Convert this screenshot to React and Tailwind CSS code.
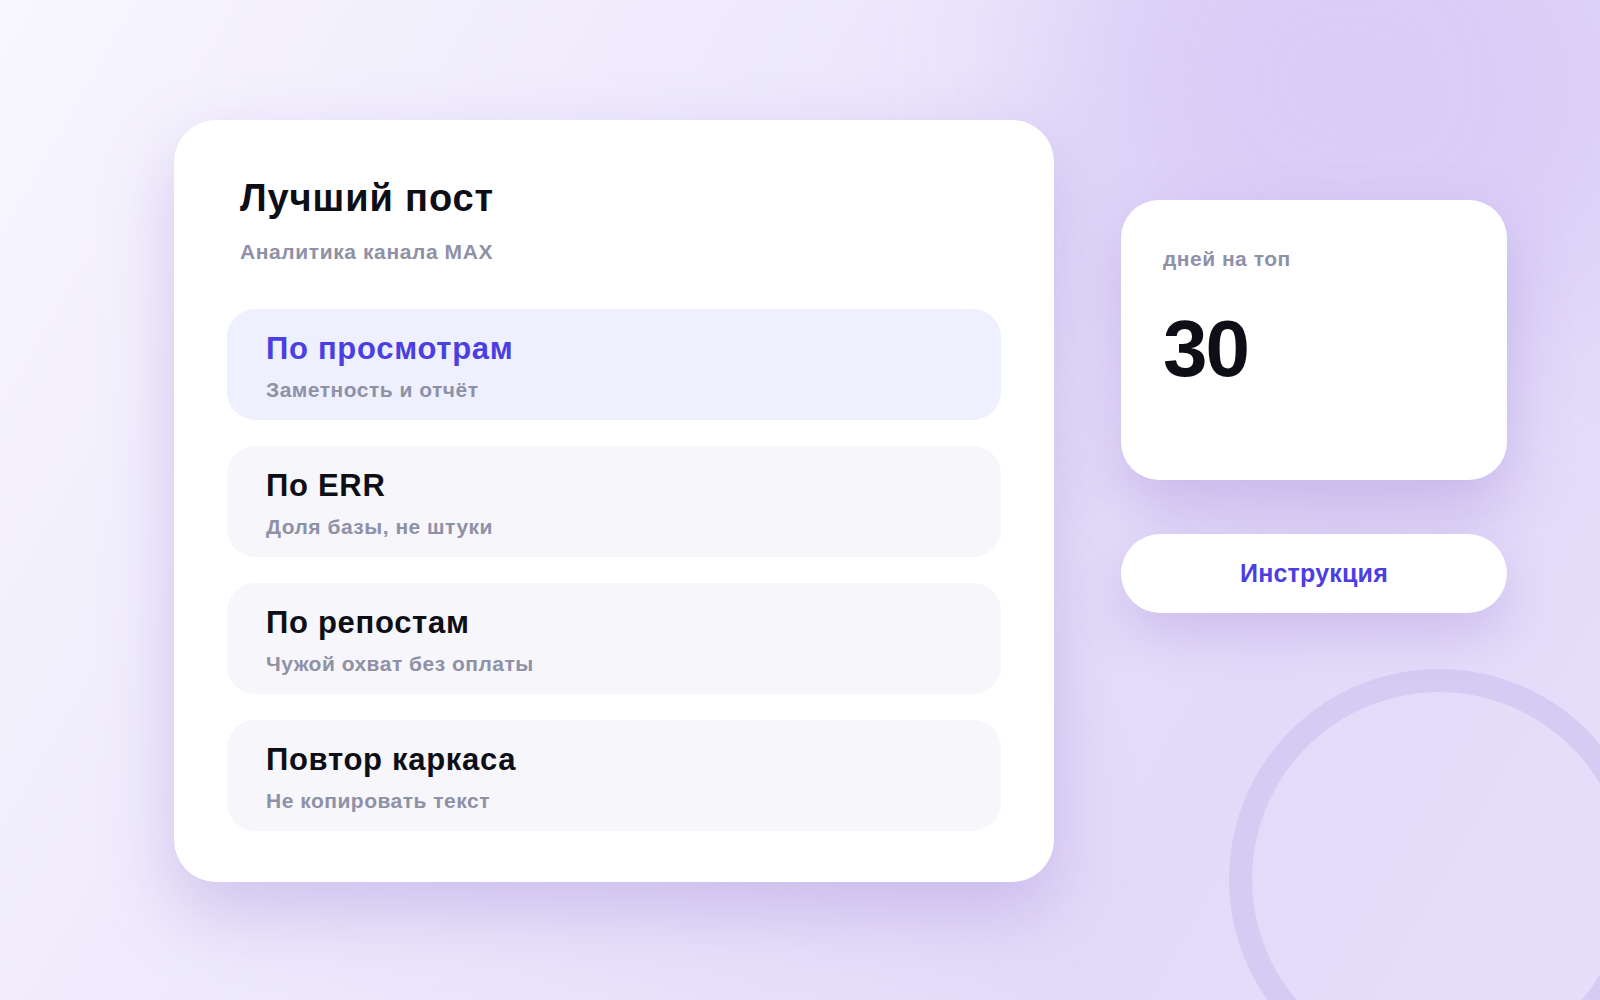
import React from 'react';

const items = [
  { title: 'По просмотрам', sub: 'Заметность и отчёт', active: true },
  { title: 'По ERR', sub: 'Доля базы, не штуки' },
  { title: 'По репостам', sub: 'Чужой охват без оплаты' },
  { title: 'Повтор каркаса', sub: 'Не копировать текст' },
];

export default function App() {
  return (
    <div
      className="relative w-[1600px] h-[1000px] overflow-hidden bg-[linear-gradient(120deg,#f8f6fe_0%,#ede8fc_40%,#e3daf9_75%,#e6defa_100%)]"
      style={{ fontFamily: '"Liberation Sans", Arial, sans-serif' }}
    >
      {/* soft glow top-right */}
      <div className="absolute left-[1050px] top-[-200px] w-[600px] h-[560px] rounded-full bg-[#d6c8f6] blur-[90px] opacity-80" />

      {/* decorative ring */}
      <div className="absolute left-[1229px] top-[669px] w-[420px] h-[420px] rounded-full border-[23px] border-[#d5ccf3]" />

      <div className="relative flex items-start gap-[67px] pl-[174px] pt-[120px]">
        {/* Main card */}
        <div className="w-[880px] bg-white rounded-[42px] pt-[55px] pb-[51px] px-[53px] shadow-[0_30px_70px_rgba(150,120,210,0.35)]">
          <div className="pl-[13px]">
            <h1 className="text-[38px] leading-[46px] font-bold text-[#0e0e16] tracking-[0.9px]">Лучший пост</h1>
            <p className="mt-[17px] text-[21px] leading-[28px] font-bold text-[#8f91a7] tracking-[0.6px]">Аналитика канала MAX</p>
          </div>
          <div className="mt-[43px] flex flex-col gap-[26px]">
            {items.map((it) => (
              <div
                key={it.title}
                className={
                  'h-[111px] rounded-[28px] pl-[39px] pt-[22px] ' +
                  (it.active ? 'bg-[#eef0fe]' : 'bg-[#f6f6fb]')
                }
              >
                <div
                  className={
                    'text-[31px] leading-[36px] font-bold tracking-[0.7px] ' +
                    (it.active ? 'text-[#4b3ee3]' : 'text-[#0e0e16]')
                  }
                >
                  {it.title}
                </div>
                <div className="mt-[9px] text-[21px] leading-[28px] font-bold text-[#8f91a7] tracking-[0.5px]">{it.sub}</div>
              </div>
            ))}
          </div>
        </div>

        {/* Right column */}
        <div className="mt-[80px] w-[386px] flex flex-col gap-[54px]">
          <div className="h-[280px] bg-white rounded-[38px] pl-[42px] pt-[45px] shadow-[0_30px_60px_rgba(150,120,210,0.35)]">
            <div className="text-[21px] leading-[28px] font-bold text-[#8f91a7] tracking-[0.5px]">дней на топ</div>
            <div className="mt-[36px] text-[80px] leading-[80px] font-bold text-[#0e0e16] tracking-[-2px]">30</div>
          </div>
          <button className="h-[79px] w-full bg-white rounded-full text-[25px] font-bold text-[#4b3ee3] tracking-[0.2px] shadow-[0_20px_50px_rgba(150,120,210,0.3)]">
            Инструкция
          </button>
        </div>
      </div>
    </div>
  );
}
